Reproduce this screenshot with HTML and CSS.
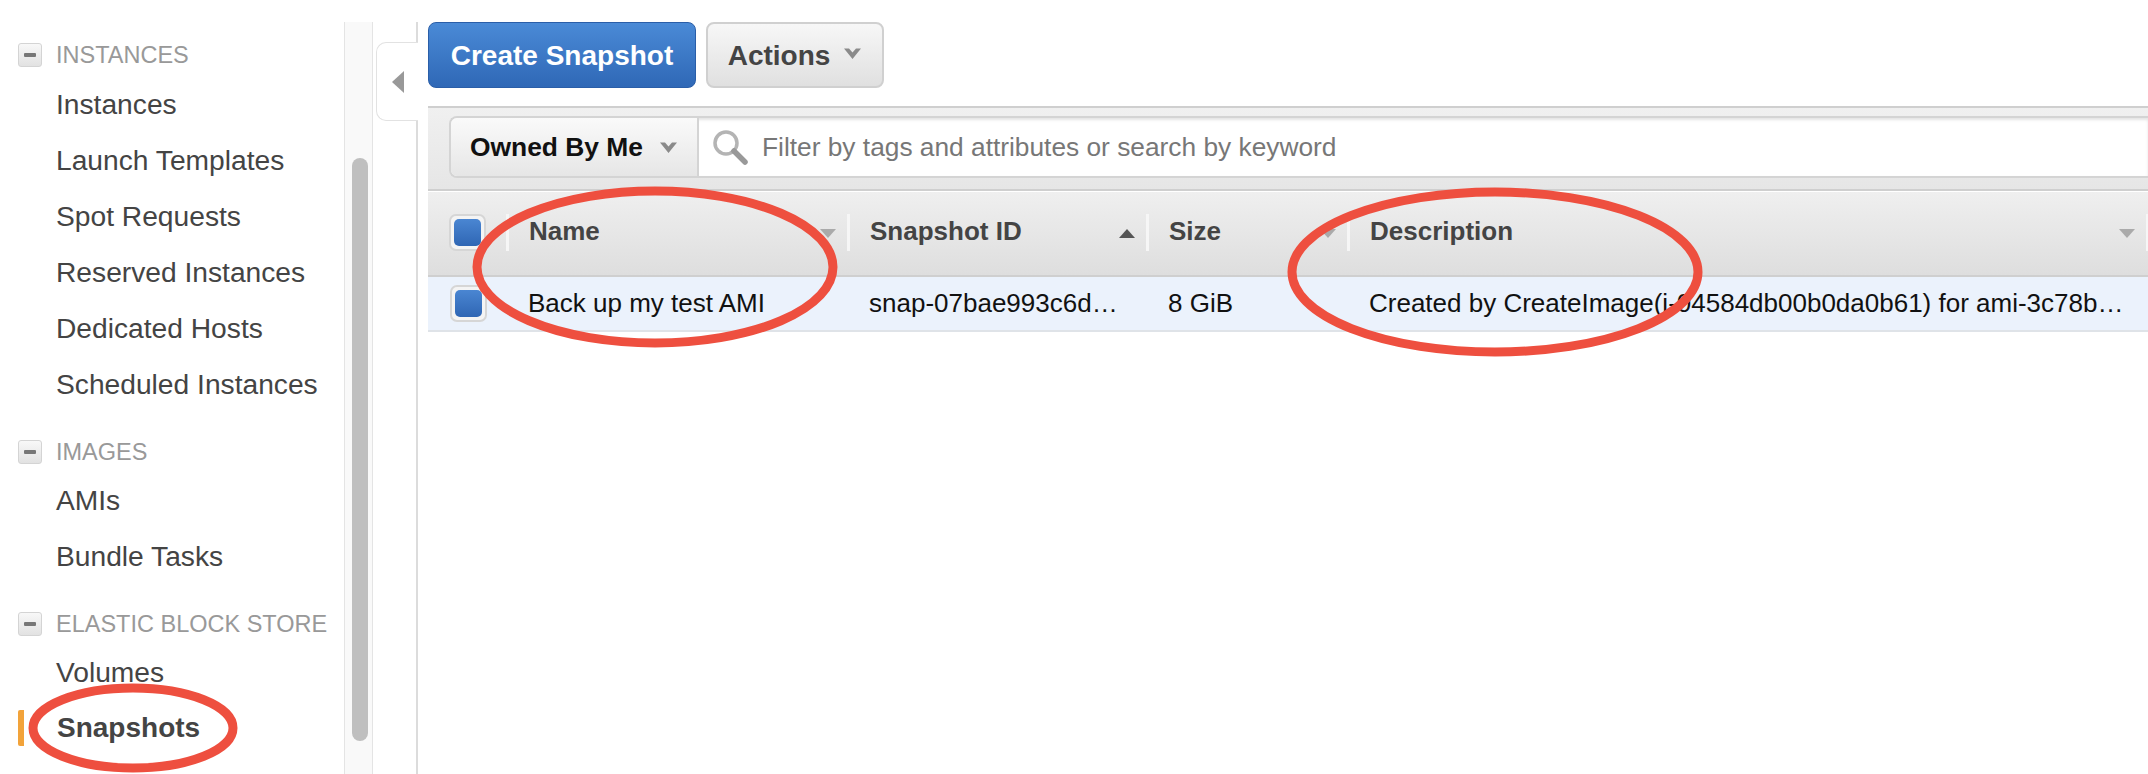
FILE: index.html
```html
<!DOCTYPE html>
<html lang="en">
<head>
    <meta charset="UTF-8">
    <title>Snapshots</title>
    <link rel="stylesheet" href="styles.css">
</head>
<body>
    <div class="page">
        <nav class="sidebar">
            <div class="nav-head first"><span class="minus"><i></i></span>INSTANCES</div>
            <a class="nav-link">Instances</a>
            <a class="nav-link">Launch Templates</a>
            <a class="nav-link">Spot Requests</a>
            <a class="nav-link">Reserved Instances</a>
            <a class="nav-link">Dedicated Hosts</a>
            <a class="nav-link">Scheduled Instances</a>
            <div class="nav-head images"><span class="minus"><i></i></span>IMAGES</div>
            <a class="nav-link">AMIs</a>
            <a class="nav-link">Bundle Tasks</a>
            <div class="nav-head ebs"><span class="minus"><i></i></span>ELASTIC BLOCK STORE</div>
            <a class="nav-link">Volumes</a>
            <a class="nav-link active">Snapshots</a>
        </nav>
        <div class="track"><div class="thumb"></div></div>
        <div class="collapse">
            <div class="collapse-tab">
                <svg width="12" height="22" viewBox="0 0 12 22"><path d="M12 0V22L0 11Z" fill="#999"/></svg>
            </div>
        </div>
        <main class="main">
            <div class="toolbar">
                <button class="btn btn-primary">Create Snapshot</button>
                <button class="btn btn-plain">Actions
                    <svg class="chev" width="19" height="13" viewBox="0 0 19 13"><path d="M1 1.5h5l3.5 4 3.5-4h5L9.5 12Z" fill="#8a8a8a"/></svg>
                </button>
            </div>
            <div class="filter-bar">
                <div class="filter">
                    <div class="owned">Owned By Me
                        <svg class="chev" width="19" height="13" viewBox="0 0 19 13"><path d="M1 1.5h5l3.5 4 3.5-4h5L9.5 12Z" fill="#8a8a8a"/></svg>
                    </div>
                    <div class="search">
                        <svg width="36" height="36" viewBox="0 0 36 36">
                            <circle cx="14" cy="14" r="11" fill="none" stroke="#b4b4b4" stroke-width="3.5"/>
                            <path d="M22 22L33 33" stroke="#999" stroke-width="5.5" stroke-linecap="round"/>
                        </svg>
                        <span>Filter by tags and attributes or search by keyword</span>
                    </div>
                </div>
            </div>
            <div class="table-head">
                <div class="check-cell"><span class="check"><i></i></span></div>
                <div class="col">Name<b class="sort"></b></div>
                <div class="col">Snapshot ID<b class="sort up"></b></div>
                <div class="col">Size<b class="sort"></b></div>
                <div class="col">Description<b class="sort"></b></div>
                <div class="col"></div>
            </div>
            <div class="table-row">
                <div class="check-cell"><span class="check"><i></i></span></div>
                <div class="cell">Back up my test AMI</div>
                <div class="cell">snap-07bae993c6d…</div>
                <div class="cell">8 GiB</div>
                <div class="cell">Created by CreateImage(i-04584db00b0da0b61) for ami-3c78b…</div>
            </div>
        </main>
    </div>
    <!-- hand drawn red marks on top of the screenshot -->
    <svg class="marks" width="2148" height="774" viewBox="0 0 2148 774">
        <ellipse cx="655" cy="267" rx="178" ry="76"/>
        <ellipse cx="1495" cy="272" rx="203" ry="80"/>
        <ellipse cx="133" cy="728" rx="100" ry="40"/>
    </svg>
</body>
</html>
```

FILE: styles.css
```css
* {
    box-sizing: border-box;
}
html, body {
    margin: 0;
    padding: 0;
    height: 774px;
    overflow: hidden;
    background-color: #fff;
}
body {
    position: relative;
    font-family: "Liberation Sans", Arial, sans-serif;
    font-size: 26px;
    color: #444;
}
.page {
    display: flex;
    height: 774px;
    padding-top: 22px;
}

/* left nav */
.sidebar {
    width: 344px;
    flex: none;
    padding-left: 18px;
}
.nav-head {
    display: flex;
    align-items: center;
    height: 40px;
    font-size: 23.5px;
    color: #999;
}
.nav-head.first {
    margin-top: 13px;
}
.nav-head.images {
    margin-top: 20px;
}
.nav-head.ebs {
    margin-top: 20px;
}
.minus {
    width: 24px;
    height: 24px;
    margin-right: 14px;
    display: flex;
    align-items: center;
    justify-content: center;
    border: 1px solid #d4d4d4;
    border-radius: 3px;
    background: linear-gradient(#f8f8f8, #e2e2e2);
}
.minus i {
    width: 12px;
    height: 4px;
    border-radius: 1px;
    background-color: #777;
}
.nav-link {
    display: block;
    height: 56px;
    line-height: 56px;
    padding-left: 38px;
    font-size: 28.2px;
}
.first + .nav-link {
    margin-top: 1px;
}
.nav-link.active {
    font-weight: bold;
    font-size: 28px;
    border-left: 6px solid #f2a33a;
    border-radius: 2px;
    padding-left: 33px;
    height: 36px;
    line-height: 36px;
    margin-top: 10px;
}
.track {
    width: 29px;
    flex: none;
    border-left: 1px solid #e4e4e4;
    border-right: 1px solid #e4e4e4;
    background-color: #f9f9f9;
    padding: 136px 0 0 7px;
}
.thumb {
    width: 16px;
    height: 583px;
    border-radius: 8px;
    background-color: #bfbfbf;
}
.collapse {
    width: 43px;
    flex: none;
    padding: 20px 0 0 3px;
}
.collapse-tab {
    position: relative;
    z-index: 1;
    width: 42px;
    height: 79px;
    display: flex;
    align-items: center;
    padding-left: 15px;
    background-color: #fff;
    border: 1px solid #e2e2e2;
    border-right: 0;
    border-radius: 10px 0 0 10px;
}

/* right side */
.main {
    flex: 1;
    min-width: 0;
    border-left: 2px solid #dcdcdc;
}
.toolbar {
    display: flex;
    gap: 10px;
    height: 84px;
    padding-left: 10px;
}
.btn {
    height: 66px;
    border-radius: 8px;
    font-family: inherit;
    font-size: 28px;
    font-weight: bold;
    padding: 2px 0 0;
}
.btn-primary {
    width: 268px;
    color: #fff;
    border: 1px solid #2a5ea8;
    background: linear-gradient(#4a8ad6, #2f68b6);
}
.btn-plain {
    width: 178px;
    color: #444;
    border: 2px solid #d0d0d0;
    background: linear-gradient(#f7f7f7, #e0e0e0);
    display: flex;
    align-items: center;
    justify-content: center;
    gap: 13px;
}
.btn-plain .chev {
    margin-top: -6px;
}
.filter-bar {
    height: 85px;
    margin-left: 10px;
    padding: 8px 0 0 21px;
    border-top: 2px solid #cfcfcf;
    border-bottom: 2px solid #cfcfcf;
    background: linear-gradient(#f0f0f0, #e6e6e6);
}
.filter {
    display: flex;
    height: 62px;
    border: 2px solid #d4d4d4;
    border-right: 0;
    border-radius: 8px 0 0 8px;
    background-color: #fff;
    box-shadow: 0 2px 3px #e4e4e4 inset;
}
.owned {
    width: 248px;
    flex: none;
    display: flex;
    align-items: center;
    padding-left: 19px;
    gap: 16px;
    font-weight: bold;
    font-size: 26.4px;
    color: #111;
    border-right: 2px solid #d4d4d4;
    border-radius: 6px 0 0 6px;
    background: linear-gradient(#fafafa, #e6e6e6);
}
.search {
    flex: 1;
    display: flex;
    align-items: center;
    padding-left: 13px;
    gap: 14px;
    color: #777;
    font-size: 26.3px;
}
.table-head, .table-row {
    display: grid;
    grid-template-columns: 78px 341px 299px 201px 799px 1fr;
    margin-left: 10px;
}
.table-head {
    height: 85px;
    padding-top: 22px;
    margin-top: 1px;
    border-bottom: 2px solid #cfcfcf;
    background: linear-gradient(#efefef, #dedede);
}
.col {
    position: relative;
    height: 37px;
    line-height: 34px;
    padding-left: 20px;
    font-weight: bold;
    font-size: 26px;
    border-left: 3px solid #f6f6f6;
}
.sort {
    position: absolute;
    right: 11px;
    top: 15px;
    border-left: 8px solid transparent;
    border-right: 8px solid transparent;
    border-top: 9px solid #aaa;
}
.sort.up {
    border-top: 0;
    border-bottom: 9px solid #555;
}
.check-cell {
    padding-left: 21px;
}
.check {
    display: flex;
    align-items: center;
    justify-content: center;
    width: 37px;
    height: 37px;
    border: 2px solid #d6d6d6;
    border-radius: 7px;
    background-color: #f4f4f4;
}
.check i {
    width: 27px;
    height: 27px;
    border-radius: 5px;
    background: linear-gradient(#4a86d2, #2f66b4);
}
.table-row {
    height: 55px;
    align-items: center;
    border-bottom: 2px solid #dfe3e8;
    background-color: #ebf2fc;
    color: #111;
    font-size: 26px;
}
.table-row .check-cell {
    padding-left: 22px;
}
.cell {
    padding-left: 22px;
    white-space: nowrap;
}

/* annotations */
.marks {
    position: absolute;
    left: 0;
    top: 0;
    z-index: 2;
    pointer-events: none;
}
.marks ellipse {
    fill: none;
    stroke: #ee4f3f;
    stroke-width: 9;
}
```
